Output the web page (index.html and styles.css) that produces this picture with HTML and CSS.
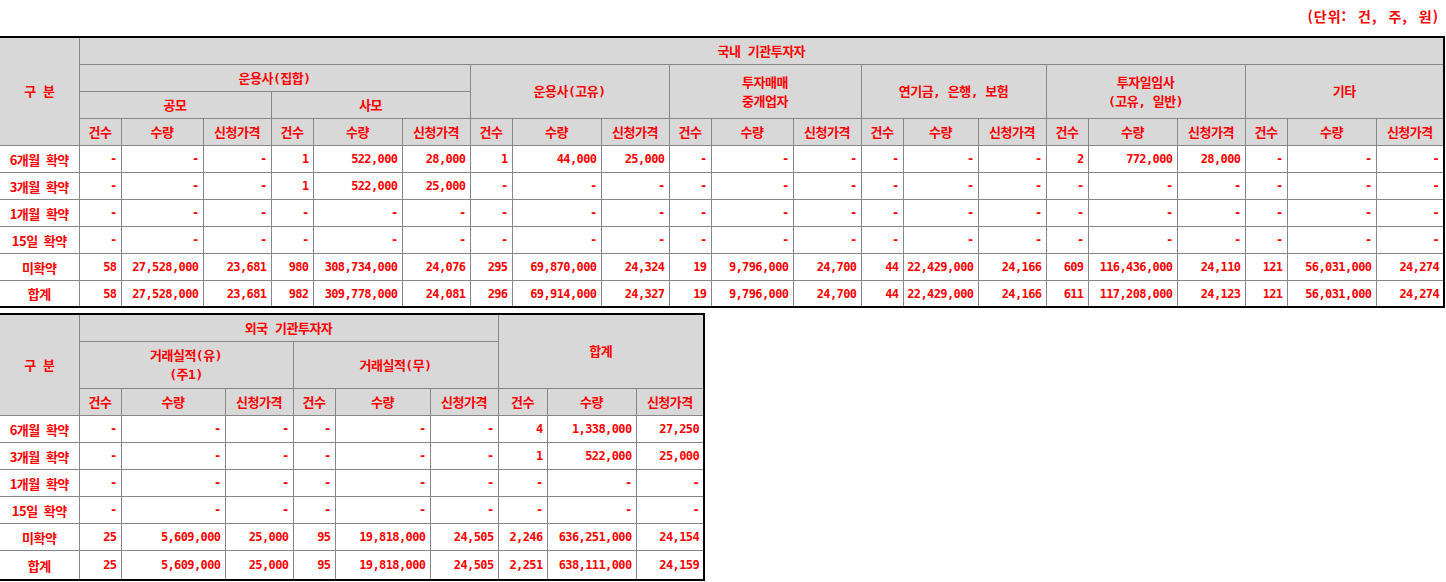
FILE: index.html
```html
<!DOCTYPE html>
<html lang="ko">
<head>
<meta charset="utf-8">
<title>기관투자자 수요예측 참여내역</title>
<link rel="stylesheet" href="styles.css">
</head>
<body>
<div class="unit">(단위: 건, 주, 원)</div>

<table class="grid t1">
  <colgroup>
    <col class="c79"><col class="c42"><col class="c82"><col class="c68">
    <col class="c42"><col class="c89"><col class="c68">
    <col class="c42"><col class="c89"><col class="c68">
    <col class="c42"><col class="c82"><col class="c68">
    <col class="c42"><col class="c75"><col class="c68">
    <col class="c42"><col class="c89"><col class="c68">
    <col class="c42"><col class="c89"><col class="c68">
  </colgroup>
  <thead>
    <tr class="h">
      <th rowspan="4">구 분</th>
      <th colspan="21">국내 기관투자자</th>
    </tr>
    <tr class="h">
      <th colspan="6">운용사(집합)</th>
      <th colspan="3" rowspan="2">운용사(고유)</th>
      <th colspan="3" rowspan="2">투자매매<br>중개업자</th>
      <th colspan="3" rowspan="2">연기금, 은행, 보험</th>
      <th colspan="3" rowspan="2">투자일임사<br>(고유, 일반)</th>
      <th colspan="3" rowspan="2">기타</th>
    </tr>
    <tr class="h">
      <th colspan="3">공모</th>
      <th colspan="3">사모</th>
    </tr>
    <tr class="h">
      <th>건수</th><th>수량</th><th>신청가격</th>
      <th>건수</th><th>수량</th><th>신청가격</th>
      <th>건수</th><th>수량</th><th>신청가격</th>
      <th>건수</th><th>수량</th><th>신청가격</th>
      <th>건수</th><th>수량</th><th>신청가격</th>
      <th>건수</th><th>수량</th><th>신청가격</th>
      <th>건수</th><th>수량</th><th>신청가격</th>
    </tr>
  </thead>
  <tbody>
    <tr>
      <th class="lbl">6개월 확약</th>
      <td>-</td><td>-</td><td>-</td>
      <td>1</td><td>522,000</td><td>28,000</td>
      <td>1</td><td>44,000</td><td>25,000</td>
      <td>-</td><td>-</td><td>-</td>
      <td>-</td><td>-</td><td>-</td>
      <td>2</td><td>772,000</td><td>28,000</td>
      <td>-</td><td>-</td><td>-</td>
    </tr>
    <tr>
      <th class="lbl">3개월 확약</th>
      <td>-</td><td>-</td><td>-</td>
      <td>1</td><td>522,000</td><td>25,000</td>
      <td>-</td><td>-</td><td>-</td>
      <td>-</td><td>-</td><td>-</td>
      <td>-</td><td>-</td><td>-</td>
      <td>-</td><td>-</td><td>-</td>
      <td>-</td><td>-</td><td>-</td>
    </tr>
    <tr>
      <th class="lbl">1개월 확약</th>
      <td>-</td><td>-</td><td>-</td>
      <td>-</td><td>-</td><td>-</td>
      <td>-</td><td>-</td><td>-</td>
      <td>-</td><td>-</td><td>-</td>
      <td>-</td><td>-</td><td>-</td>
      <td>-</td><td>-</td><td>-</td>
      <td>-</td><td>-</td><td>-</td>
    </tr>
    <tr>
      <th class="lbl">15일 확약</th>
      <td>-</td><td>-</td><td>-</td>
      <td>-</td><td>-</td><td>-</td>
      <td>-</td><td>-</td><td>-</td>
      <td>-</td><td>-</td><td>-</td>
      <td>-</td><td>-</td><td>-</td>
      <td>-</td><td>-</td><td>-</td>
      <td>-</td><td>-</td><td>-</td>
    </tr>
    <tr>
      <th class="lbl">미확약</th>
      <td>58</td><td>27,528,000</td><td>23,681</td>
      <td>980</td><td>308,734,000</td><td>24,076</td>
      <td>295</td><td>69,870,000</td><td>24,324</td>
      <td>19</td><td>9,796,000</td><td>24,700</td>
      <td>44</td><td>22,429,000</td><td>24,166</td>
      <td>609</td><td>116,436,000</td><td>24,110</td>
      <td>121</td><td>56,031,000</td><td>24,274</td>
    </tr>
    <tr>
      <th class="lbl">합계</th>
      <td>58</td><td>27,528,000</td><td>23,681</td>
      <td>982</td><td>309,778,000</td><td>24,081</td>
      <td>296</td><td>69,914,000</td><td>24,327</td>
      <td>19</td><td>9,796,000</td><td>24,700</td>
      <td>44</td><td>22,429,000</td><td>24,166</td>
      <td>611</td><td>117,208,000</td><td>24,123</td>
      <td>121</td><td>56,031,000</td><td>24,274</td>
    </tr>
  </tbody>
</table>

<table class="grid t2">
  <colgroup>
    <col class="c79"><col class="c42"><col class="c104"><col class="c68">
    <col class="c42"><col class="c95"><col class="c68">
    <col class="c49"><col class="c89"><col class="c68">
  </colgroup>
  <thead>
    <tr class="h">
      <th rowspan="3">구 분</th>
      <th colspan="6">외국 기관투자자</th>
      <th colspan="3" rowspan="2">합계</th>
    </tr>
    <tr class="h2">
      <th colspan="3">거래실적(유)<br>(주1)</th>
      <th colspan="3">거래실적(무)</th>
    </tr>
    <tr class="h">
      <th>건수</th><th>수량</th><th>신청가격</th>
      <th>건수</th><th>수량</th><th>신청가격</th>
      <th>건수</th><th>수량</th><th>신청가격</th>
    </tr>
  </thead>
  <tbody>
    <tr>
      <th class="lbl">6개월 확약</th>
      <td>-</td><td>-</td><td>-</td>
      <td>-</td><td>-</td><td>-</td>
      <td>4</td><td>1,338,000</td><td>27,250</td>
    </tr>
    <tr>
      <th class="lbl">3개월 확약</th>
      <td>-</td><td>-</td><td>-</td>
      <td>-</td><td>-</td><td>-</td>
      <td>1</td><td>522,000</td><td>25,000</td>
    </tr>
    <tr>
      <th class="lbl">1개월 확약</th>
      <td>-</td><td>-</td><td>-</td>
      <td>-</td><td>-</td><td>-</td>
      <td>-</td><td>-</td><td>-</td>
    </tr>
    <tr>
      <th class="lbl">15일 확약</th>
      <td>-</td><td>-</td><td>-</td>
      <td>-</td><td>-</td><td>-</td>
      <td>-</td><td>-</td><td>-</td>
    </tr>
    <tr>
      <th class="lbl">미확약</th>
      <td>25</td><td>5,609,000</td><td>25,000</td>
      <td>95</td><td>19,818,000</td><td>24,505</td>
      <td>2,246</td><td>636,251,000</td><td>24,154</td>
    </tr>
    <tr class="last">
      <th class="lbl">합계</th>
      <td>25</td><td>5,609,000</td><td>25,000</td>
      <td>95</td><td>19,818,000</td><td>24,505</td>
      <td>2,251</td><td>638,111,000</td><td>24,159</td>
    </tr>
  </tbody>
</table>
</body>
</html>
```

FILE: styles.css
```css
html, body {
  margin: 0;
  padding: 0;
  background: #ffffff;
}

body {
  font-family: "Noto Sans CJK KR", "Noto Sans", sans-serif;
  font-size: 13px;
  font-weight: bold;
  color: #ff0000;
}

.unit {
  height: 36px;
  line-height: 32px;
  text-align: right;
  padding-right: 7px;
  font-size: 14px;
  letter-spacing: 1px;
  word-spacing: 6px;
  box-sizing: border-box;
}

.grid {
  border-collapse: collapse;
  table-layout: fixed;
  border-top: 2px solid #000;
  border-bottom: 2px solid #000;
  border-right: 2px solid #000;
  border-left: 0;
}

.t1 { width: 1444px; }
.t2 { width: 704px; margin-top: 5px; }

.grid th,
.grid td {
  border: 1px solid #878787;
  padding: 0;
  height: 26px;
  overflow: hidden;
  white-space: nowrap;
}

.grid tr > th:first-child { border-left: 0; }

.grid thead th {
  background: #d8d8d8;
  text-align: center;
  font-family: "DejaVu Sans Mono", "Noto Sans CJK KR", monospace;
  font-weight: bold;
  letter-spacing: -0.5px;
  line-height: 19px;
}

.grid .h2 th { height: 46px; }

.grid tbody th.lbl {
  background: #ffffff;
  text-align: center;
  font-weight: bold;
  letter-spacing: -0.5px;
  word-spacing: 3px;
}

.grid tbody td {
  text-align: right;
  padding-right: 4px;
  font-family: "DejaVu Sans Mono", "Liberation Mono", monospace;
  font-size: 12px;
  letter-spacing: -0.6px;
  font-weight: bold;
}

.t1 tbody tr:last-child th,
.t1 tbody tr:last-child td { height: 25px; }

.t2 tbody tr.last th,
.t2 tbody tr.last td { height: 28px; }

.c42 { width: 42px; }
.c49 { width: 49px; }
.c68 { width: 68px; }
.c75 { width: 75px; }
.c79 { width: 79px; }
.c82 { width: 82px; }
.c89 { width: 89px; }
.c95 { width: 95px; }
.c104 { width: 104px; }
```
